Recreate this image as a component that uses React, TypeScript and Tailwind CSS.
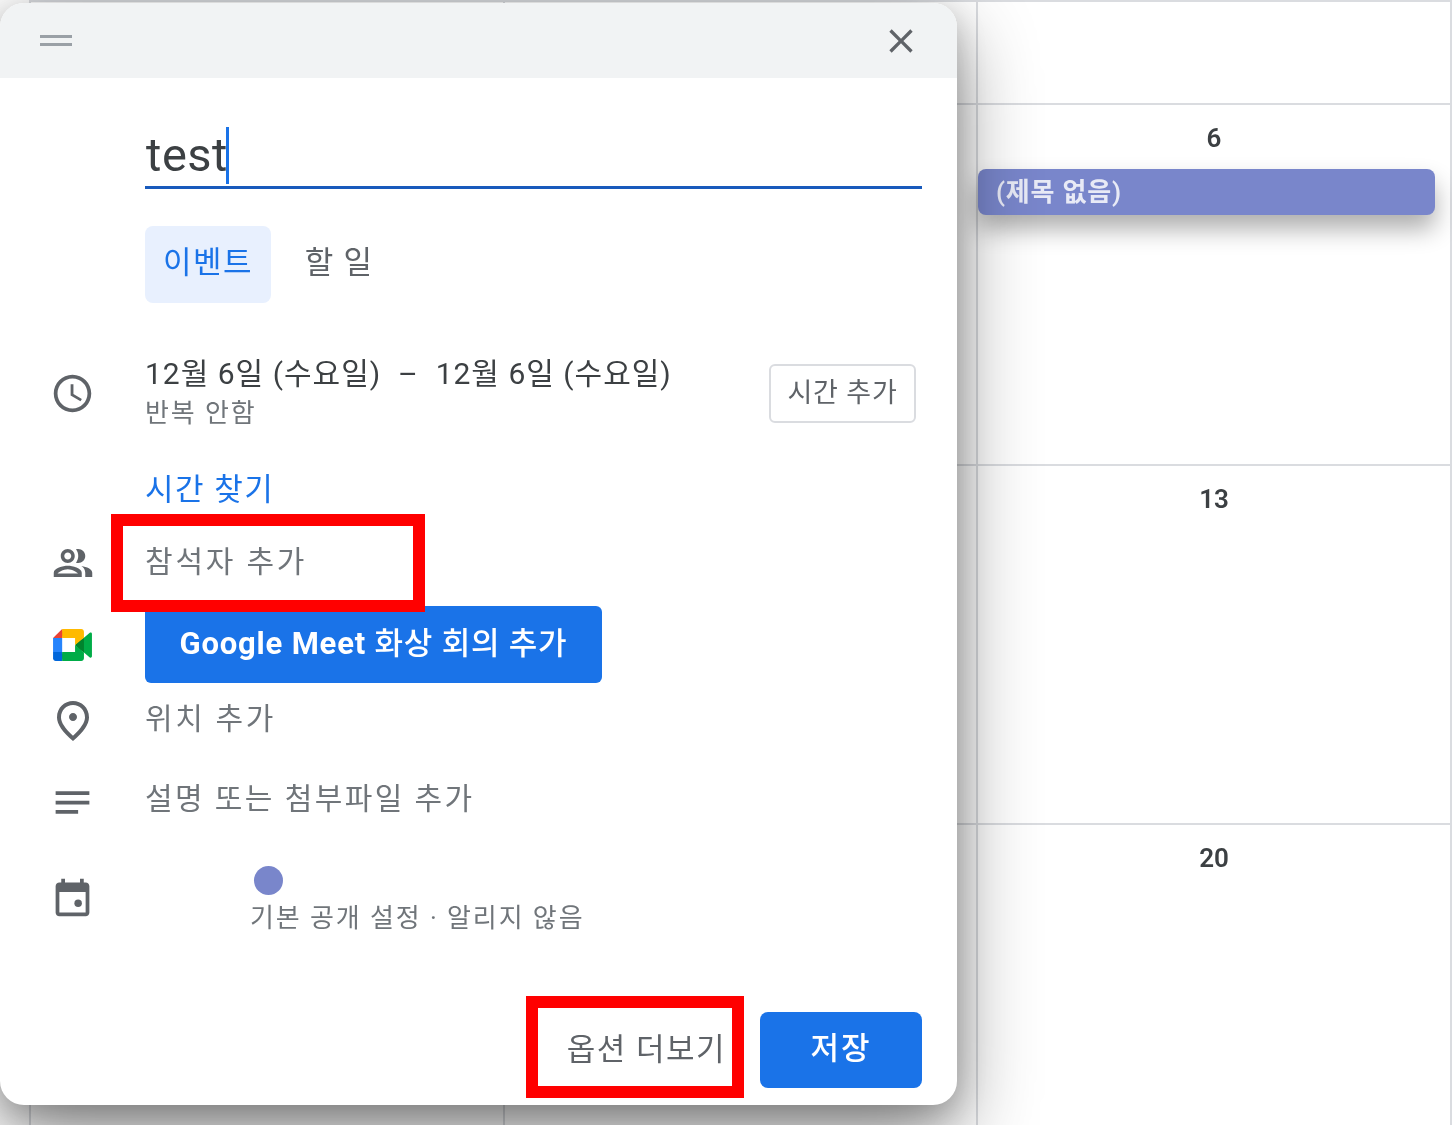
const FONT = "font-['Roboto','Noto_Sans_CJK_KR',sans-serif]";

function IconSlot({ children }: { children: React.ReactNode }) {
  return <div className="w-[145px] shrink-0 flex justify-center">{children}</div>;
}

function Clock() {
  return (
    <svg viewBox="0 0 24 24" className="w-[45px] h-[45px] fill-[#5f6368]">
      <path d="M11.99 2C6.47 2 2 6.48 2 12s4.47 10 9.99 10C17.52 22 22 17.52 22 12S17.52 2 11.99 2zM12 20c-4.42 0-8-3.58-8-8s3.58-8 8-8 8 3.58 8 8-3.58 8-8 8zm.5-13H11v6l5.25 3.15.75-1.23-4.5-2.67z" />
    </svg>
  );
}

function People() {
  return (
    <svg viewBox="0 0 24 24" className="w-[42px] h-[42px] fill-[#5f6368]">
      <path d="M9 12c2.2 0 4-1.8 4-4s-1.8-4-4-4-4 1.8-4 4 1.8 4 4 4zm0-6c1.1 0 2 .9 2 2s-.9 2-2 2-2-.9-2-2 .9-2 2-2zm0 7.5c-2.7 0-8 1.3-8 4V20h16v-2.500c0-2.700-5.300-4-8-4zM3.200 18c.200-.7 3.300-2.500 5.800-2.500s5.600 1.800 5.800 2.500H3.200zM15 12c2.200 0 4-1.800 4-4s-1.800-4-4-4c-.5 0-.9.100-1.300.200.800 1 1.300 2.400 1.300 3.800s-.5 2.800-1.300 3.800c.400.100.800.200 1.300.200zm1.800 1.700c1.300.9 2.200 2.200 2.200 3.800V20h4v-2.500c0-2-3.100-3.300-6.200-3.800z" />
    </svg>
  );
}

function MeetLogo() {
  return (
    <svg viewBox="0 0 87.5 72" className="w-[39px] h-[32px]">
      <path fill="#00832d" d="M49.5 36l8.53 9.75 11.47 7.33 2-17.02-2-16.64-11.69 6.44z" />
      <path fill="#0066da" d="M0 51.5V66c0 3.315 2.685 6 6 6h14.5l3-10.96-3-9.54-9.95-3z" />
      <path fill="#e94235" d="M20.5 0L0 20.5l10.55 3 9.95-3 2.95-9.41z" />
      <path fill="#2684fc" d="M20.5 20.5H0v31h20.5z" />
      <path fill="#00ac47" d="M82.6 8.68L69.5 19.42v33.66l13.16 10.79c1.97 1.54 4.85.135 4.85-2.37V11c0-2.535-2.945-3.925-4.91-2.32zM49.5 36v15.5h-29V72h43c3.315 0 6-2.685 6-6V53.08z" />
      <path fill="#ffba00" d="M63.5 0h-43v20.5h29V36l20-16.57V6c0-3.315-2.685-6-6-6z" />
    </svg>
  );
}

function Pin() {
  return (
    <svg viewBox="0 0 24 24" className="w-[48px] h-[48px] fill-[#5f6368]">
      <path d="M12 12c-1.100 0-2-.9-2-2s.9-2 2-2 2 .9 2 2-.9 2-2 2zm6-1.800C18 6.570 15.350 4 12 4s-6 2.570-6 6.200c0 2.340 1.950 5.440 6 9.140 4.050-3.700 6-6.800 6-9.140zM12 2c4.200 0 8 3.220 8 8.200 0 3.320-2.670 7.250-8 11.800-5.330-4.550-8-8.480-8-11.800C4 5.220 7.800 2 12 2z" />
    </svg>
  );
}

function Notes() {
  return (
    <svg viewBox="0 0 24 24" className="w-[45px] h-[45px] fill-[#5f6368]">
      <path d="M3 6h18v2H3zM3 11h18v2H3zM3 16h12v2H3z" />
    </svg>
  );
}

function CalendarIcon() {
  return (
    <svg viewBox="0 0 24 24" className="w-[45px] h-[45px] fill-[#5f6368]">
      <path d="M19 4h-1V2h-2v2H8V2H6v2H5c-1.100 0-2 .9-2 2v14c0 1.100.9 2 2 2h14c1.100 0 2-.9 2-2V6c0-1.100-.9-2-2-2zm0 16H5V9h14v11z" />
      <circle cx="15" cy="15" r="2" />
    </svg>
  );
}

function Day({ n, className }: { n?: string; className?: string }) {
  return (
    <div className={`border-l-2 border-t-2 border-[#dadce0] flex justify-center ${className ?? ""}`}>
      {n && <span className="text-[26px] leading-[30px] mt-[18px] font-semibold text-[#3c4043]">{n}</span>}
    </div>
  );
}

export default function App() {
  return (
    <div className={`relative w-[1452px] h-[1125px] overflow-hidden bg-white ${FONT} blur-[0.5px]`}>
      {/* calendar behind */}
      <div className="grid grid-cols-[29px_474px_473px_474px_2px] grid-rows-[103px_361px_359px_302px] w-[1452px] h-[1125px]">
        <div className="col-start-1 row-start-1 row-span-4" />
        <Day className="border-t-0" />
        <Day className="border-t-0" />
        <Day className="border-t-0" />
        <div className="bg-[#dadce0]" />
        <Day className="col-start-2" />
        <Day />
        <Day n="6" />
        <div className="bg-[#dadce0]" />
        <Day className="col-start-2" />
        <Day />
        <Day n="13" />
        <div className="bg-[#dadce0]" />
        <Day className="col-start-2" />
        <Day />
        <Day n="20" />
        <div className="bg-[#dadce0]" />
      </div>

      {/* event chip */}
      <div className="absolute left-[978px] top-[169px] w-[457px] h-[46px] rounded-[8px] bg-[#7986cb] pl-[18px] flex items-center text-[26px] font-semibold tracking-[0.8px] text-[#e8eaf6] shadow-[0_14px_24px_rgba(0,0,0,0.32)]">
        (제목 없음)
      </div>

      {/* dialog */}
      <div className="absolute left-0 top-[3px] w-[957px] h-[1102px] bg-white rounded-[24px] overflow-hidden shadow-[0_30px_80px_rgba(0,0,0,0.45),0_10px_30px_rgba(0,0,0,0.2)] flex flex-col">
        <div className="h-[75px] shrink-0 bg-[#f1f3f4] flex items-center justify-between pl-[40px] pr-[36px]">
          <div className="w-[32px] flex flex-col gap-[5px]">
            <div className="h-[3px] bg-[#9aa0a6]" />
            <div className="h-[3px] bg-[#9aa0a6]" />
          </div>
          <svg viewBox="0 0 24 24" className="w-[40px] h-[40px] fill-[#5f6368]">
            <path d="M19 6.410 17.590 5 12 10.590 6.410 5 5 6.410 10.590 12 5 17.590 6.410 19 12 13.410 17.590 19 19 17.590 13.410 12z" />
          </svg>
        </div>

        <div className="pl-[145px] pr-[35px] pt-[43px]">
          <div className="border-b-[3px] border-[#185abc] h-[68px] flex items-center pt-[3px]">
            <span className="text-[47px] leading-[60px] pl-[1px] text-[#3c4043] tracking-[0.5px]">test</span>
            <span className="w-[3px] h-[57px] bg-[#1a73e8] -ml-[2px]" />
          </div>
        </div>

        <div className="pl-[145px] mt-[37px] flex h-[77px]">
          <div className="w-[126px] rounded-[8px] bg-[#e8f0fe] flex items-center justify-center text-[31px] pb-[2px] tracking-[1.5px] text-[#1a73e8]">이벤트</div>
          <div className="w-[136px] flex items-center justify-center text-[31px] pb-[2px] text-[#5f6368] tracking-[1.2px]">할 일</div>
        </div>

        <div className="mt-[50px] flex items-center h-[80px]">
          <IconSlot><Clock /></IconSlot>
          <div className="flex-1">
            <div className="text-[30px] leading-[40px] text-[#3c4043] whitespace-pre tracking-[1px] -mt-[1px]">12월 6일 (수요일)  –  12월 6일 (수요일)</div>
            <div className="text-[26px] leading-[36px] pt-[1px] text-[#70757a] tracking-[1.9px]">반복 안함</div>
          </div>
          <div className="mr-[41px] w-[147px] h-[59px] rounded-[6px] border-2 border-[#dadce0] flex items-center justify-center text-[27px] text-[#5f6368] tracking-[0.8px]">시간 추가</div>
        </div>

        <div className="mt-[37px] h-[40px] pl-[145px] flex items-center text-[31px] text-[#1a73e8] tracking-[1.5px]">시간 찾기</div>

        <div className="mt-[30px] h-[46px] flex items-center">
          <IconSlot><People /></IconSlot>
          <span className="text-[30px] text-[#70757a] tracking-[2.8px] -mt-[4px]">참석자 추가</span>
        </div>

        <div className="mt-[20px] h-[77px] flex items-center">
          <IconSlot><MeetLogo /></IconSlot>
          <div className="w-[457px] h-[77px] rounded-[6px] bg-[#1a73e8] flex items-center justify-center text-[31px] font-medium text-white pb-[1px] tracking-[0.8px]"><span className="font-bold">Google Meet</span>&nbsp;화상 회의 추가</div>
        </div>

        <div className="mt-[15px] h-[46px] flex items-center">
          <IconSlot><Pin /></IconSlot>
          <span className="text-[30px] text-[#70757a] tracking-[2.6px] -mt-[6px]">위치 추가</span>
        </div>

        <div className="mt-[35px] h-[46px] flex items-center">
          <IconSlot><Notes /></IconSlot>
          <span className="text-[30px] text-[#70757a] tracking-[2.4px] -mt-[8px]">설명 또는 첨부파일 추가</span>
        </div>

        <div className="mt-[32px] h-[80px] flex items-center">
          <IconSlot><CalendarIcon /></IconSlot>
          <div className="pl-[105px] pt-[4px] flex flex-col">
            <div className="ml-[4px] w-[29px] h-[29px] rounded-full bg-[#7986cb]" />
            <div className="mt-[8px] text-[26px] leading-[30px] text-[#70757a] tracking-[1.9px]">기본 공개 설정 · 알리지 않음</div>
          </div>
        </div>

        <div className="mt-[75px] pr-[35px] flex justify-end items-center gap-[34px]">
          <span className="text-[31px] text-[#5f6368] tracking-[1.5px]">옵션 더보기</span>
          <div className="w-[162px] h-[76px] rounded-[8px] bg-[#1a73e8] flex items-center justify-center text-[31px] font-medium text-white pb-[2px] tracking-[2px]">저장</div>
        </div>
      </div>

      {/* red annotation boxes */}
      <div className="absolute left-[111px] top-[514px] w-[314px] h-[98px] border-[12px] border-[#ff0000]" />
      <div className="absolute left-[526px] top-[996px] w-[218px] h-[102px] border-[12px] border-[#ff0000]" />
    </div>
  );
}
